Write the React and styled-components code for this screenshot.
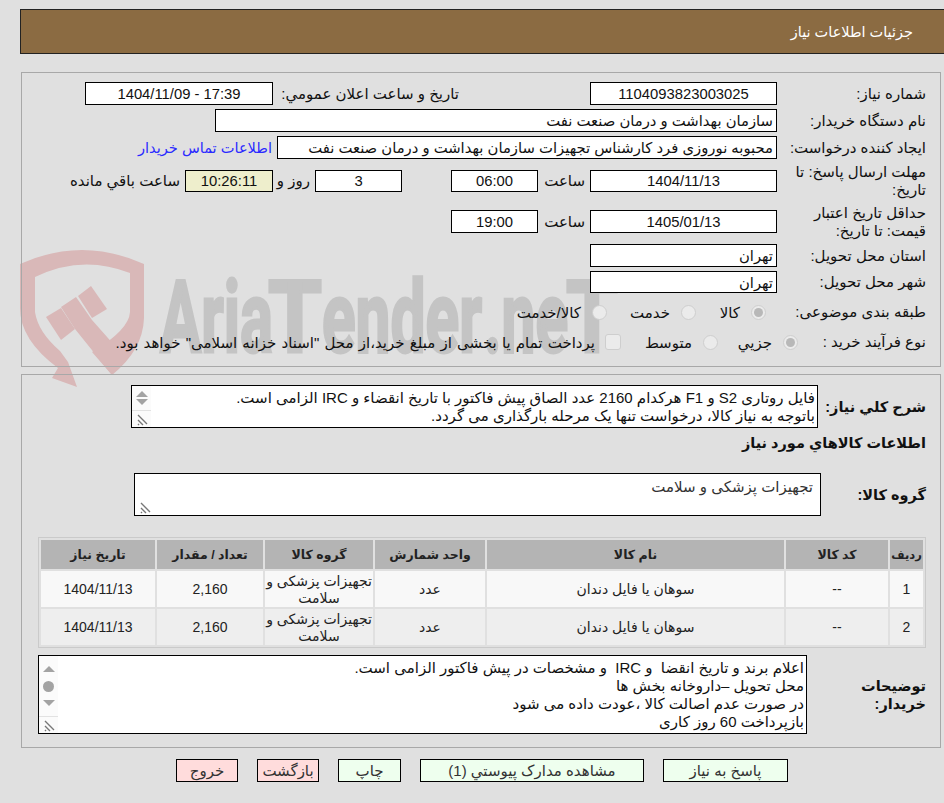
import styled, { createGlobalStyle } from 'styled-components'

const GlobalStyle = createGlobalStyle`
html, body {
	margin: 0;
	padding: 0;
	background: #e0e0e0;
}
body {
	font-family: "Liberation Sans", "DejaVu Sans", sans-serif;
	font-size: 15px;
	color: #111;
}
* {
	box-sizing: border-box;
}
`

const Page = styled.div`
	position: relative;
	width: 944px;
	height: 803px;
	padding-top: 9px;
	overflow: hidden;
	direction: rtl;
`
const Watermark = styled.svg`
	position: absolute;
	left: 0;
	top: 0;
	z-index: 0;
	direction: ltr;
`
const Content = styled.div`
	position: relative;
	z-index: 1;
`
const Header = styled.div`
	height: 45px;
	margin-left: 20px;
	padding-right: 31px;
	display: flex;
	align-items: center;
	background: #8b6b42;
	border: 1px solid #222;
	border-right: 0;
	color: #fff;
	font-size: 14.5px;
`
const Panel = styled.div`
	height: ${(p) => p.$h}px;
	margin: ${(p) => p.$top}px 3px 0 21px;
	padding: ${(p) => p.$pad}px 14px 0 0;
	border: 1px solid #a8a8a8;
`
const Row = styled.div`
	display: flex;
	align-items: center;
	height: ${(p) => p.$h || 23}px;
	margin-top: ${(p) => p.$top || 0}px;
`
const Label = styled.div`
	flex: none;
	width: ${(p) => p.$w || 141}px;
	margin-left: ${(p) => p.$gap ?? 8}px;
	margin-right: ${(p) => p.$mr || 0}px;
	font-size: ${(p) => (p.$bold ? 14.5 : 15)}px;
	font-weight: ${(p) => (p.$bold ? 700 : 400)};
	line-height: 18px;
`
const Caption = styled.div`
	flex: none;
	width: ${(p) => p.$w}px;
	padding-right: 5px;
	white-space: nowrap;
`
const Field = styled.div`
	flex: none;
	width: ${(p) => p.$w}px;
	height: 100%;
	margin-right: ${(p) => p.$mr || 0}px;
	padding: 0 3px;
	display: flex;
	align-items: center;
	justify-content: ${(p) => (p.$center ? 'center' : 'flex-start')};
	background: ${(p) => p.$bg || '#fff'};
	border: 1px solid #000;
	font-size: 14.8px;
	white-space: nowrap;
	overflow: hidden;
`
const ContactLink = styled.a`
	margin-right: 5px;
	color: #2a2aff;
	font-size: 14.6px;
	text-decoration: none;
	white-space: nowrap;
`
const Option = styled.div`
	flex: none;
	width: ${(p) => p.$w}px;
	margin-right: ${(p) => p.$mr || 0}px;
	display: flex;
	align-items: center;
	white-space: nowrap;
`
const OptionText = styled.span`
	margin-right: ${(p) => p.$gap || 11}px;
	margin-top: 2px;
	word-spacing: ${(p) => p.$spread || 0}px;
`
const Radio = styled.span`
	flex: none;
	width: 15px;
	height: 15px;
	display: flex;
	align-items: center;
	justify-content: center;
	background: #ebebeb;
	border: 1px solid #cecece;
	border-radius: 50%;
	&::after {
		content: '';
		display: ${(p) => (p.$checked ? 'block' : 'none')};
		width: 9px;
		height: 9px;
		background: #b8b8b8;
		border-radius: 50%;
	}
`
const CheckBox = styled.span`
	flex: none;
	width: 16px;
	height: 16px;
	background: #ebebeb;
	border: 1px solid #cecece;
	border-radius: 3px;
`
const TextBox = styled.div`
	flex: none;
	display: flex;
	width: ${(p) => p.$w}px;
	height: ${(p) => p.$h}px;
	background: #fff;
	border: 1px solid #000;
	overflow: hidden;
`
const BoxText = styled.div`
	flex: 1;
	padding: ${(p) => p.$pad || '3px 2px 0 0'};
	line-height: 18px;
	color: ${(p) => p.$color || '#111'};
	white-space: pre;
`
const Gutter = styled.div`
	flex: none;
	width: 19px;
	display: flex;
	flex-direction: column;
	align-items: center;
	background: ${(p) => (p.$plain ? '#fff' : '#fbfbfb')};
`
const GutterArrows = styled.div`
	flex: 1;
	display: flex;
	flex-direction: column;
	align-items: center;
	justify-content: space-evenly;
	width: 100%;
	padding: 2px 0;
	border-bottom: ${(p) => (p.$plain ? 0 : '1px solid #e2e2e2')};
`
const ArrowUp = styled.span`
	width: 0;
	height: 0;
	border-left: 6px solid transparent;
	border-right: 6px solid transparent;
	border-bottom: 6px solid #a3a3a3;
`
const ArrowDown = styled(ArrowUp)`
	border-bottom: 0;
	border-top: 6px solid #a3a3a3;
`
const Thumb = styled.span`
	width: 11px;
	height: 11px;
	background: #a3a3a3;
	border-radius: 50%;
`
const Grip = styled.svg`
	flex: none;
	align-self: flex-start;
	margin: 1px 0 1px 1px;
`
const Goods = styled.table`
	width: 888px;
	height: 111px;
	margin: 21px 0 0 0;
	table-layout: fixed;
	border: 1px solid #cacaca;
	border-collapse: separate;
	border-spacing: 2px;
	color: #222;
	font-size: 14px;
`
const HeadCell = styled.th`
	padding: 0;
	height: 29px;
	background: #b4b4b4;
	font-size: ${(p) => (p.$tight ? 11.5 : 12.5)}px;
	font-weight: 700;
	text-align: center;
`
const Cell = styled.td`
	padding: 1px 0 0;
	height: 36px;
	background: ${(p) => (p.$odd ? '#f8f8f8' : '#eeeeee')};
	line-height: 17px;
	text-align: center;
`
const Actions = styled.div`
	display: flex;
	gap: 19px;
	margin: 11px 156px 0 0;
`
const ActionButton = styled.button`
	width: ${(p) => p.$w}px;
	height: 23px;
	padding: 0;
	background: ${(p) => (p.$danger ? '#ffdcdc' : '#eeffee')};
	border: 1px solid #000;
	color: #333;
	font: inherit;
`

const GripIcon = () => (
	<Grip width="14" height="14" viewBox="0 0 14 14">
		<path d="M1 3 L10 12 M1 8 L6 13 M1 12 L2 13" stroke="#777" strokeWidth="1.4" fill="none" />
	</Grip>
)

const ScrollGutter = ({ thumb }) => (
	<Gutter>
		<GutterArrows>
			<ArrowUp />
			{thumb && <Thumb />}
			<ArrowDown />
		</GutterArrows>
		<GripIcon />
	</Gutter>
)

const LogoMark = () => (
	<Watermark width="944" height="803" viewBox="0 0 944 803">
		<g fill="#d9b8b8">
			<path d="M20 264 Q82 236 144 264 L144 318 Q143 350 112 375 L92 352 Q129 330 130 312 L130 273 Q82 254 35 277 L35 312 Q38 332 60 351 L68 362 L77 387 L52 378 L58 368 Q20 340 20 308 Z" />
			<path d="M46 317 L61 308 L75 329 L61 340 Z" />
			<path d="M61 307 L76 297 L92 320 L123 355 L112 375 L75 329 Z" />
			<path d="M78 296 L91 286 L107 309 L92 318 Z" />
		</g>
		<g fill="#c4c4c4" stroke="#c4c4c4" strokeWidth="3" fontFamily="Roboto, sans-serif" fontWeight="700" fontSize="100">
			<text x="160" y="352" textLength="113" lengthAdjust="spacingAndGlyphs">Aria</text>
			<text x="268" y="352" textLength="54" lengthAdjust="spacingAndGlyphs">T</text>
			<text x="322" y="352" textLength="160" lengthAdjust="spacingAndGlyphs">ender</text>
			<text x="484" y="352" textLength="84" lengthAdjust="spacingAndGlyphs">.ne</text>
			<text x="566" y="352" textLength="52" lengthAdjust="spacingAndGlyphs">T</text>
		</g>
	</Watermark>
)

const rows = [
	{ id: 1, odd: true },
	{ id: 2, odd: false },
]

const App = () => {
	return (
		<Page>
			<GlobalStyle />
			<LogoMark />
			<Content>
				<Header>جزئیات اطلاعات نیاز</Header>
				<Panel $top={18} $h={295} $pad={9}>
					<Row>
						<Label>شماره نیاز:</Label>
						<Field $w={187} $center>1104093823003025</Field>
						<Label $w={181} $gap={5} $mr={131}>تاریخ و ساعت اعلان عمومي:</Label>
						<Field $w={188} $center>17:39 - 1404/11/09</Field>
					</Row>
					<Row $top={4}>
						<Label>نام دستگاه خریدار:</Label>
						<Field $w={562}>سازمان بهداشت و درمان صنعت نفت</Field>
					</Row>
					<Row $top={4}>
						<Label>ایجاد کننده درخواست:</Label>
						<Field $w={500}>محبوبه نوروزی فرد کارشناس تجهیزات سازمان بهداشت و درمان صنعت نفت</Field>
						<ContactLink href="#">اطلاعات تماس خریدار</ContactLink>
					</Row>
					<Row $top={11} $h={22}>
						<Label>مهلت ارسال پاسخ: تا تاریخ:</Label>
						<Field $w={187} $center>1404/11/13</Field>
						<Caption $w={52}>ساعت</Caption>
						<Field $w={87} $center>06:00</Field>
						<Field $w={87} $mr={49} $center>3</Field>
						<Caption $w={42}>روز و</Caption>
						<Field $w={88} $bg="#eeeecc" $center>10:26:11</Field>
						<Caption $w={120}>ساعت باقي مانده</Caption>
					</Row>
					<Row $top={18}>
						<Label>حداقل تاریخ اعتبار قیمت: تا تاریخ:</Label>
						<Field $w={187} $center>1405/01/13</Field>
						<Caption $w={52}>ساعت</Caption>
						<Field $w={87} $center>19:00</Field>
					</Row>
					<Row $top={11}>
						<Label>استان محل تحویل:</Label>
						<Field $w={187}>تهران</Field>
					</Row>
					<Row $top={4} $h={22}>
						<Label>شهر محل تحویل:</Label>
						<Field $w={187}>تهران</Field>
					</Row>
					<Row $top={7} $h={24}>
						<Label>طبقه بندی موضوعی:</Label>
						<Option $w={70} $mr={11}><Radio $checked /><OptionText>کالا</OptionText></Option>
						<Option $w={89}><Radio /><OptionText>خدمت</OptionText></Option>
						<Option $w={120}><Radio /><OptionText>کالا/خدمت</OptionText></Option>
					</Row>
					<Row $top={6} $h={24}>
						<Label>نوع فرآیند خرید :</Label>
						<Option $w={80} $mr={-21}><Radio $checked /><OptionText>جزیي</OptionText></Option>
						<Option $w={97}><Radio /><OptionText>متوسط</OptionText></Option>
						<Option $w={490}><CheckBox /><OptionText $gap={10} $spread={1}>پرداخت تمام یا بخشی از مبلغ خرید،از محل "اسناد خزانه اسلامی" خواهد بود.</OptionText></Option>
					</Row>
				</Panel>
				<Panel $top={7} $h={374} $pad={10}>
					<Row $h={43}>
						<Label $w={108} $gap={0} $bold>شرح کلي نیاز:</Label>
						<TextBox $w={687} $h={43}>
							<BoxText>
								<div>فایل روتاری S2 و F1 هرکدام 2160 عدد الصاق پیش فاکتور با تاریخ انقضاء و IRC الزامی است.</div>
								<div>باتوجه به نیاز کالا، درخواست تنها یک مرحله بارگذاری می گردد.</div>
							</BoxText>
							<ScrollGutter />
						</TextBox>
					</Row>
					<Row $top={5} $h={20}>
						<Label $w={300} $bold>اطلاعات کالاهاي مورد نیاز</Label>
					</Row>
					<Row $top={20} $h={43}>
						<Label $w={105} $gap={0} $bold>گروه کالا:</Label>
						<TextBox $w={687} $h={43}>
							<BoxText $pad="4px 7px 0 0" $color="#333">تجهیزات پزشکی و سلامت</BoxText>
							<Gutter $plain>
								<GutterArrows $plain />
								<GripIcon />
							</Gutter>
						</TextBox>
					</Row>
					<Goods>
						<colgroup>
							<col style={{ width: 33 }} />
							<col style={{ width: 102 }} />
							<col style={{ width: 297 }} />
							<col style={{ width: 110 }} />
							<col style={{ width: 108 }} />
							<col style={{ width: 106 }} />
							<col style={{ width: 114 }} />
						</colgroup>
						<thead>
							<tr>
								<HeadCell $tight>ردیف</HeadCell>
								<HeadCell>کد کالا</HeadCell>
								<HeadCell>نام کالا</HeadCell>
								<HeadCell>واحد شمارش</HeadCell>
								<HeadCell>گروه کالا</HeadCell>
								<HeadCell>تعداد / مقدار</HeadCell>
								<HeadCell>تاریخ نیاز</HeadCell>
							</tr>
						</thead>
						<tbody>
							{rows.map((row) => (
								<tr key={row.id}>
									<Cell $odd={row.odd}>{row.id}</Cell>
									<Cell $odd={row.odd}>--</Cell>
									<Cell $odd={row.odd}>سوهان یا فایل دندان</Cell>
									<Cell $odd={row.odd}>عدد</Cell>
									<Cell $odd={row.odd}>تجهیزات پزشکی و سلامت</Cell>
									<Cell $odd={row.odd}>2,160</Cell>
									<Cell $odd={row.odd}>1404/11/13</Cell>
								</tr>
							))}
						</tbody>
					</Goods>
					<Row $top={7} $h={79}>
						<Label $w={119} $gap={0} $bold>توضیحات خریدار:</Label>
						<TextBox $w={769} $h={79}>
							<BoxText>
								<div>اعلام برند و تاریخ انقضا  و IRC  و مشخصات در پیش فاکتور الزامی است.</div>
								<div>محل تحویل –داروخانه بخش ها</div>
								<div>در صورت عدم اصالت کالا ،عودت داده می شود</div>
								<div>بازپرداخت 60 روز کاری</div>
							</BoxText>
							<ScrollGutter thumb />
						</TextBox>
					</Row>
				</Panel>
				<Actions>
					<ActionButton $w={125}>پاسخ به نیاز</ActionButton>
					<ActionButton $w={224}>مشاهده مدارک پیوستي (1)</ActionButton>
					<ActionButton $w={63}>چاپ</ActionButton>
					<ActionButton $w={62} $danger>بازگشت</ActionButton>
					<ActionButton $w={62} $danger>خروج</ActionButton>
				</Actions>
			</Content>
		</Page>
	)
}

export default App
